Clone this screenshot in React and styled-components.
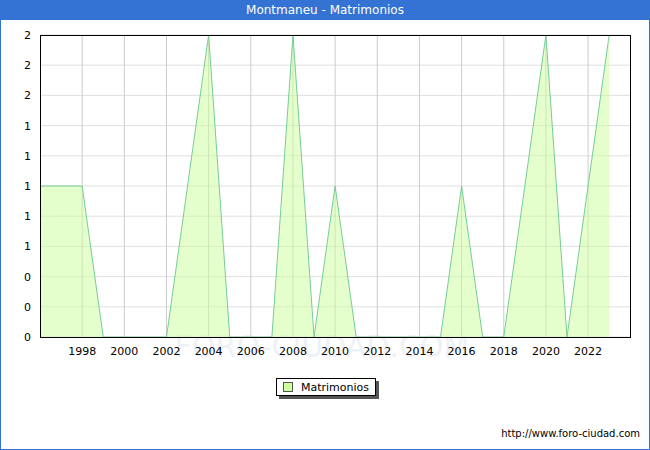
import React from "react";
import styled, { createGlobalStyle } from "styled-components";

const Global = createGlobalStyle`
  html, body { margin: 0; padding: 0; background: #fff; }
  body { font-family: "DejaVu Sans", Verdana, sans-serif; }
`;

const Frame = styled.div`
  width: 650px; height: 450px; box-sizing: border-box;
  border: 1px solid #3473d4; border-top: none;
  display: flex; flex-direction: column; position: relative; background: #fff;
`;
const TitleBar = styled.div`
  height: 20px; background: #3473d4; color: #fff; font-size: 12px;
  display: flex; align-items: center; justify-content: center;
`;
const Chart = styled.svg`
  display: block; width: 648px; height: 338px;
`;
const LegendRow = styled.div`
  display: flex; justify-content: center; padding-left: 2px; margin-top: 20px;
`;
const Legend = styled.div`
  display: flex; align-items: center; gap: 8px; height: 16px; padding: 0 6px;
  border: 1px solid #000; box-shadow: 3px 3px 0 #555; background: #fff;
  font-size: 11px; color: #000;
`;
const Swatch = styled.span`
  width: 8px; height: 8px; background: #ccff99; border: 1px solid #555;
`;
const Footer = styled.div`
  margin-top: auto; padding: 0 9px 10px 0; text-align: right;
  font-size: 10px; color: #000;
`;

const data = [[1996,1],[1998,1],[1999,0],[2002,0],[2004,2],[2005,0],[2007,0],[2008,2],[2009,0],[2010,1],[2011,0],[2015,0],[2016,1],[2017,0],[2018,0],[2020,2],[2021,0],[2023,2]];
const X = (y) => 40 + (y - 1996) * 21.08;
const Y = (v) => 337 - v * 151;
const yLabels = ["2","2","2","1","1","1","1","1","0","0","0"];

export default function App() {
  const pts = data.map(([a, b]) => `${X(a)},${Y(b)}`).join(" ");
  const area = `${X(1996)},337 ${pts} ${X(2023)},337`;
  return (
    <>
      <Global />
      <Frame>
        <TitleBar>Montmaneu - Matrimonios</TitleBar>
        <Chart viewBox="1 20 648 338">
          <text x="322" y="357" textAnchor="middle" fontSize="30" fill="#eef1f8" fontFamily="DejaVu Sans, sans-serif">FORO-CIUDAD.COM</text>
          {yLabels.map((l, i) => {
            const y = 35 + i * 30.2;
            return (
              <g key={i}>
                <line x1="40" x2="630" y1={y} y2={y} stroke="#e0e0e0" />
                <text x="31" y={y + 4} textAnchor="end" fontSize="11" fill="#000">{l}</text>
              </g>
            );
          })}
          {Array.from({ length: 13 }, (_, i) => 1998 + i * 2).map((yr) => (
            <g key={yr}>
              <line x1={X(yr)} x2={X(yr)} y1="35" y2="337" stroke="#cccccc" />
              <text x={X(yr)} y="355" textAnchor="middle" fontSize="11" fill="#000">{yr}</text>
            </g>
          ))}
          <polygon points={area} fill="#ccff99" fillOpacity="0.5" />
          <polyline points={pts} fill="none" stroke="#77cc99" strokeWidth="1" />
          <rect x="40.5" y="35.5" width="590" height="302" fill="none" stroke="#000" />
        </Chart>
        <LegendRow>
          <Legend><Swatch />Matrimonios</Legend>
        </LegendRow>
        <Footer>http://www.foro-ciudad.com</Footer>
      </Frame>
    </>
  );
}
